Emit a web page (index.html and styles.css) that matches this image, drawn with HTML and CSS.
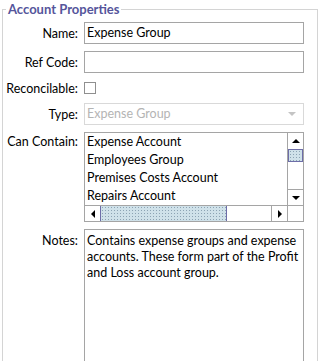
FILE: index.html
```html
<!DOCTYPE html>
<html lang="en">
<head>
    <meta charset="UTF-8">
    <title>Account Properties</title>
    <link rel="stylesheet" href="styles.css">
</head>
<body>
    <fieldset class="props">
        <legend>Account Properties</legend>
        <div class="form">
            <label class="lbl">Name:</label>
            <div class="field">Expense Group</div>

            <label class="lbl">Ref Code:</label>
            <div class="field"></div>

            <label class="lbl">Reconcilable:</label>
            <div class="check-row"><span class="checkbox"></span></div>

            <label class="lbl">Type:</label>
            <div class="field select disabled">
                <span>Expense Group</span>
                <span class="caret"></span>
            </div>

            <label class="lbl top">Can Contain:</label>
            <div class="list">
                <div class="items">
                    <div class="item">Expense Account</div>
                    <div class="item">Employees Group</div>
                    <div class="item">Premises Costs Account</div>
                    <div class="item">Repairs Account</div>
                </div>
                <div class="vscroll">
                    <div class="btn"><span class="tri up"></span></div>
                    <div class="vthumb"></div>
                    <div class="track"></div>
                    <div class="btn down"><span class="tri dn"></span></div>
                </div>
                <div class="hscroll">
                    <div class="btn"><span class="tri lt"></span></div>
                    <div class="hthumb"></div>
                    <div class="track"></div>
                    <div class="btn right"><span class="tri rt"></span></div>
                </div>
                <div class="corner"></div>
            </div>

            <label class="lbl top notes-lbl">Notes:</label>
            <div class="notes">Contains expense groups and expense<br>accounts. These form part of the Profit<br>and Loss account group.</div>
        </div>
    </fieldset>
</body>
</html>
```

FILE: styles.css
```css
body {
    margin: 0;
    font-family: Lato, "Noto Sans", sans-serif;
    font-size: 12.5px;
    color: #000;
    background: #fff;
    overflow: hidden;
}
.props {
    margin: 0 0 0 2px;
    width: 316px;
    height: 400px;
    box-sizing: border-box;
    padding: 4px 13px 0 0;
    border: 1px solid #d4d4d4;
}
.props legend {
    margin-left: 3px;
    padding: 0 2px;
    font-size: 13px;
    font-weight: bold;
    line-height: 18px;
    color: #55559b;
}
.form {
    display: grid;
    grid-template-columns: 75px 220px;
    column-gap: 6px;
    row-gap: 7px;
}
.lbl {
    text-align: right;
    white-space: nowrap;
    align-self: center;
}
.lbl.top {
    align-self: start;
    padding-top: 2px;
}
.lbl.notes-lbl {
    padding-top: 4px;
}
.field {
    height: 22px;
    box-sizing: border-box;
    border: 1px solid #a5a5a5;
    padding: 0 2px;
    line-height: 20px;
    white-space: nowrap;
}
.select {
    display: flex;
    justify-content: space-between;
    align-items: center;
}
.disabled {
    border-color: #d9d9d9;
    color: #b4b4b4;
}
.caret {
    width: 0;
    height: 0;
    margin-right: 5px;
    border-left: 4px solid transparent;
    border-right: 4px solid transparent;
    border-top: 4px solid #c4c4c4;
}
.check-row {
    height: 16px;
    display: flex;
    align-items: center;
}
.checkbox {
    width: 12px;
    height: 12px;
    box-sizing: border-box;
    border: 1px solid #8f8f8f;
    background: #fff;
}
.list {
    height: 90px;
    box-sizing: border-box;
    border: 1px solid #a5a5a5;
    display: grid;
    grid-template-columns: 202px 16px;
    grid-template-rows: 72px 16px;
}
.items {
    overflow: hidden;
}
.item {
    height: 18px;
    line-height: 18px;
    padding-left: 2px;
    white-space: nowrap;
}
.vscroll {
    display: flex;
    flex-direction: column;
    border-left: 1px solid #a5a5a5;
}
.hscroll {
    display: flex;
    border-top: 1px solid #a5a5a5;
}
.btn {
    width: 15px;
    height: 15px;
    flex: none;
    display: flex;
    align-items: center;
    justify-content: center;
    background: #fff;
}
.vscroll .btn {
    width: 15px;
    height: 16px;
}
.btn.down {
    border-top: 1px solid #a5a5a5;
    height: 15px;
}
.btn.right {
    border-left: 1px solid #a5a5a5;
}
.track {
    flex: 1;
    background: #fff;
}
.vthumb,
.hthumb {
    box-sizing: border-box;
    border: 1px solid #6d6da8;
    background-color: #cfe1e9;
    background-image: radial-gradient(circle, #8ca3b3 0.6px, transparent 0.9px);
    background-size: 3px 3px;
}
.vthumb {
    height: 13px;
}
.hthumb {
    width: 127px;
    border-top: none;
    border-bottom: none;
    border-right: 1px solid #6d6da8;
}
.corner {
    border-top: 1px solid #a5a5a5;
    border-left: 1px solid #a5a5a5;
    background: #fff;
}
.tri {
    width: 0;
    height: 0;
}
.tri.up {
    border-left: 4px solid transparent;
    border-right: 4px solid transparent;
    border-bottom: 4px solid #000;
}
.tri.dn {
    border-left: 4px solid transparent;
    border-right: 4px solid transparent;
    border-top: 4px solid #000;
}
.tri.lt {
    border-top: 4px solid transparent;
    border-bottom: 4px solid transparent;
    border-right: 4px solid #000;
}
.tri.rt {
    border-top: 4px solid transparent;
    border-bottom: 4px solid transparent;
    border-left: 4px solid #000;
}
.notes {
    height: 160px;
    box-sizing: border-box;
    border: 1px solid #a5a5a5;
    padding: 3px 2px;
    line-height: 16px;
    white-space: nowrap;
}
```
